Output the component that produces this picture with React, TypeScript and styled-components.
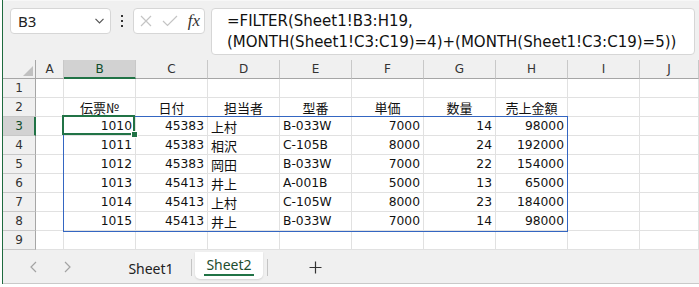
import React from "react";
import styled, { createGlobalStyle } from "styled-components";

const GlobalStyle = createGlobalStyle`
  html, body { margin: 0; padding: 0; background: #ffffff; }
  body { width: 699px; height: 287px; overflow: hidden; }
`;

const GREEN = "#217346";
const CHROME = "#f0f0f0";
const GRID = "#e1e1e1";
const HEAD_LINE = "#c8c8c8";

const Window = styled.div`
  margin-left: 2px;
  border-left: 1px solid #1f6b3f;
  width: 696px;
  display: flex;
  flex-direction: column;
  background: ${CHROME};
`;

const FormulaBar = styled.div`
  height: 60px;
  box-sizing: border-box;
  padding: 7px 4px 0 7px;
  display: flex;
  align-items: flex-start;
  background: ${CHROME};
  border-top: 1px solid #f7f7f7;
`;

const Box = styled.div`
  box-sizing: border-box;
  background: #ffffff;
  border: 1px solid #d6d6d6;
  border-radius: 4px;
  height: 26px;
  display: flex;
  align-items: center;
`;

const NameBox = styled(Box)`
  width: 101px;
  padding: 0 6px 0 7px;
  justify-content: space-between;
`;

const NameText = styled.span`
  font-family: "Noto Sans", sans-serif;
  font-size: 15px;
  color: #222;
`;

const DotsCell = styled.div`
  width: 22px;
  height: 26px;
  display: flex;
  align-items: center;
  justify-content: center;
`;

const FxBox = styled(Box)`
  width: 72px;
  padding: 0 4px 0 6px;
  justify-content: space-between;
`;

const FxLabel = styled.span`
  font-family: "Liberation Serif", "DejaVu Serif", serif;
  font-style: italic;
  font-size: 17px;
  color: #333;
  line-height: 1;
  margin-top: -2px;
`;

const FormulaBox = styled(Box)`
  margin-left: 6px;
  flex: 1;
  height: 47px;
  align-items: flex-start;
  padding: 0 0 0 15px;
`;

const FormulaText = styled.div`
  font-family: "DejaVu Sans", sans-serif;
  font-size: 15px;
  line-height: 21px;
  color: #111;
  padding-top: 2px;
  white-space: pre;
`;

const Sheet = styled.div`
  position: relative;
  display: grid;
  grid-template-columns: 33px 28px repeat(8, 72px) 1fr;
  grid-auto-rows: 19px;
  background: #ffffff;
`;

const Corner = styled.div`
  position: relative;
  box-sizing: border-box;
  background: ${CHROME};
  border-right: 1px solid #a6a6a6;
  border-bottom: 1px solid #a6a6a6;
`;

const CornerTriangle = styled.svg`
  position: absolute;
  right: 2px;
  bottom: 2px;
`;

const ColHead = styled.div<{ $sel?: boolean }>`
  box-sizing: border-box;
  background: ${(p) => (p.$sel ? "#d2d2d2" : CHROME)};
  border-right: 1px solid ${HEAD_LINE};
  border-bottom: ${(p) => (p.$sel ? `2px solid ${GREEN}` : "1px solid #a6a6a6")};
  font-family: "DejaVu Sans", sans-serif;
  font-size: 12px;
  color: ${(p) => (p.$sel ? "#0f4d2a" : "#333")};
  display: flex;
  align-items: center;
  justify-content: center;
  padding-top: ${(p) => (p.$sel ? "1px" : "0")};
`;

const RowHead = styled.div<{ $sel?: boolean }>`
  box-sizing: border-box;
  background: ${(p) => (p.$sel ? "#d2d2d2" : CHROME)};
  border-bottom: 1px solid ${HEAD_LINE};
  border-right: ${(p) => (p.$sel ? `2px solid ${GREEN}` : "1px solid #a6a6a6")};
  font-family: "DejaVu Sans", sans-serif;
  font-size: 12px;
  color: ${(p) => (p.$sel ? "#0f4d2a" : "#333")};
  display: flex;
  align-items: center;
  justify-content: center;
  padding-left: ${(p) => (p.$sel ? "1px" : "0")};
`;

const Cell = styled.div<{ $align?: "left" | "right" | "center"; $jp?: boolean }>`
  position: relative;
  box-sizing: border-box;
  border-right: 1px solid ${GRID};
  border-bottom: 1px solid ${GRID};
  padding: 0 3px;
  display: flex;
  align-items: center;
  justify-content: ${(p) =>
    p.$align === "right" ? "flex-end" : p.$align === "center" ? "center" : "flex-start"};
  font-family: ${(p) =>
    p.$jp ? `"Noto Sans CJK JP", sans-serif` : `"DejaVu Sans", "Noto Sans CJK JP", sans-serif`};
  font-size: ${(p) => (p.$jp ? "13px" : "12.3px")};
  color: #111;
  white-space: nowrap;
  overflow: visible;
`;

const Selection = styled.div`
  position: absolute;
  top: -2px;
  left: -2px;
  right: 0;
  bottom: 0;
  border: 2px solid ${GREEN};
  pointer-events: none;
  z-index: 3;
`;

const FillHandle = styled.div`
  position: absolute;
  right: -5px;
  bottom: -5px;
  width: 5px;
  height: 5px;
  background: ${GREEN};
  border: 1px solid #ffffff;
`;

const SpillBorder = styled.div`
  position: absolute;
  left: 60px;
  top: 56px;
  width: 505px;
  height: 116px;
  box-sizing: border-box;
  border: 1px solid #3466c2;
  pointer-events: none;
  z-index: 2;
`;

const TabBar = styled.div`
  height: 34px;
  box-sizing: border-box;
  border-bottom: 1px solid #c9c9c9;
  padding: 2px 0 0 13px;
  display: flex;
  align-items: flex-start;
  background: ${CHROME};
`;

const NavButton = styled.div`
  width: 34px;
  height: 30px;
  display: flex;
  align-items: center;
  justify-content: center;
`;

const Tab = styled.div<{ $active?: boolean; $w: number; $ml: number }>`
  box-sizing: border-box;
  width: ${(p) => p.$w}px;
  margin-left: ${(p) => p.$ml}px;
  height: 27px;
  display: flex;
  flex-direction: column;
  align-items: center;
  padding-top: ${(p) => (p.$active ? "3px" : "7px")};
  background: ${(p) => (p.$active ? "#ffffff" : "transparent")};
  border-radius: 0 0 5px 5px;
  box-shadow: ${(p) => (p.$active ? "0 1px 2px rgba(0,0,0,0.12)" : "none")};
`;

const TabLabel = styled.span<{ $active?: boolean }>`
  font-family: "Noto Sans", sans-serif;
  font-size: 14px;
  line-height: 19px;
  color: ${(p) => (p.$active ? "#1e4d2e" : "#222")};
  border-bottom: 2px solid ${(p) => (p.$active ? GREEN : "transparent")};
  padding: 0 2px;
`;

const TabSep = styled.div<{ $ml: number }>`
  width: 1px;
  height: 17px;
  margin-top: 7px;
  margin-left: ${(p) => p.$ml}px;
  background: #c4c4c4;
`;

const AddButton = styled.div`
  width: 24px;
  height: 30px;
  margin-left: 35px;
  display: flex;
  align-items: center;
  justify-content: center;
`;

const COLS = ["A", "B", "C", "D", "E", "F", "G", "H", "I", "J"];

type Row = [number, number, string, string, number, number, number];
const DATA: Row[] = [
  [1010, 45383, "上村", "B-033W", 7000, 14, 98000],
  [1011, 45383, "相沢", "C-105B", 8000, 24, 192000],
  [1012, 45383, "岡田", "B-033W", 7000, 22, 154000],
  [1013, 45413, "井上", "A-001B", 5000, 13, 65000],
  [1014, 45413, "上村", "C-105W", 8000, 23, 184000],
  [1015, 45413, "井上", "B-033W", 7000, 14, 98000],
];
const HEADERS = ["伝票№", "日付", "担当者", "型番", "単価", "数量", "売上金額"];

function Chevron() {
  return (
    <svg width="9" height="6" viewBox="0 0 9 6">
      <polyline points="0.5,0.8 4.5,4.8 8.5,0.8" fill="none" stroke="#555" strokeWidth="1.2" />
    </svg>
  );
}

function VDots() {
  return (
    <svg width="4" height="14" viewBox="0 0 4 14">
      <rect x="1" y="1" width="2" height="2" fill="#333" />
      <rect x="1" y="6" width="2" height="2" fill="#333" />
      <rect x="1" y="11" width="2" height="2" fill="#333" />
    </svg>
  );
}

function CrossIcon() {
  return (
    <svg width="12" height="12" viewBox="0 0 12 12">
      <path d="M1 1 L11 11 M11 1 L1 11" stroke="#c4c4c4" strokeWidth="1.2" fill="none" />
    </svg>
  );
}

function CheckIcon() {
  return (
    <svg width="16" height="12" viewBox="0 0 16 12">
      <polyline points="1,6 5.5,10.5 15,1" stroke="#c4c4c4" strokeWidth="1.2" fill="none" />
    </svg>
  );
}

function NavArrow({ dir }: { dir: "left" | "right" }) {
  const pts = dir === "left" ? "6,1 1,6 6,11" : "1,1 6,6 1,11";
  return (
    <svg width="7" height="12" viewBox="0 0 7 12">
      <polyline points={pts} fill="none" stroke="#a3a3a3" strokeWidth="1.2" />
    </svg>
  );
}

function PlusIcon() {
  return (
    <svg width="13" height="13" viewBox="0 0 13 13">
      <path d="M6.5 0.5 V12.5 M0.5 6.5 H12.5" stroke="#333" strokeWidth="1.2" fill="none" />
    </svg>
  );
}

function DataRow({ n, row }: { n: number; row?: Row }) {
  const sel = n === 3;
  return (
    <>
      <RowHead $sel={sel}>{n}</RowHead>
      <Cell />
      {row ? (
        <>
          <Cell $align="right">
            {row[0]}
            {sel && (
              <Selection>
                <FillHandle />
              </Selection>
            )}
          </Cell>
          <Cell $align="right">{row[1]}</Cell>
          <Cell $jp>{row[2]}</Cell>
          <Cell>{row[3]}</Cell>
          <Cell $align="right">{row[4]}</Cell>
          <Cell $align="right">{row[5]}</Cell>
          <Cell $align="right">{row[6]}</Cell>
        </>
      ) : (
        Array.from({ length: 7 }).map((_, i) => <Cell key={i} />)
      )}
      <Cell />
      <Cell />
    </>
  );
}

export default function App() {
  return (
    <>
      <GlobalStyle />
      <Window>
        <FormulaBar>
          <NameBox>
            <NameText>B3</NameText>
            <Chevron />
          </NameBox>
          <DotsCell>
            <VDots />
          </DotsCell>
          <FxBox>
            <CrossIcon />
            <CheckIcon />
            <FxLabel>fx</FxLabel>
          </FxBox>
          <FormulaBox>
            <FormulaText>
              {"=FILTER(Sheet1!B3:H19,\n(MONTH(Sheet1!C3:C19)=4)+(MONTH(Sheet1!C3:C19)=5))"}
            </FormulaText>
          </FormulaBox>
        </FormulaBar>

        <Sheet>
          <Corner>
            <CornerTriangle width="10" height="10" viewBox="0 0 10 10">
              <polygon points="10,0 10,10 0,10" fill="#c0c0c0" />
            </CornerTriangle>
          </Corner>
          {COLS.map((c) => (
            <ColHead key={c} $sel={c === "B"}>
              {c}
            </ColHead>
          ))}

          <DataRow n={1} />

          <RowHead>2</RowHead>
          <Cell />
          {HEADERS.map((h) => (
            <Cell key={h} $align="center" $jp>
              {h}
            </Cell>
          ))}
          <Cell />
          <Cell />

          {DATA.map((r, i) => (
            <DataRow key={i} n={i + 3} row={r} />
          ))}
          <DataRow n={9} />

          <SpillBorder />
        </Sheet>

        <TabBar>
          <NavButton>
            <NavArrow dir="left" />
          </NavButton>
          <NavButton>
            <NavArrow dir="right" />
          </NavButton>
          <Tab $w={72} $ml={31}>
            <TabLabel>Sheet1</TabLabel>
          </Tab>
          <TabSep $ml={4} />
          <Tab $w={68} $ml={3} $active>
            <TabLabel $active>Sheet2</TabLabel>
          </Tab>
          <TabSep $ml={4} />
          <AddButton>
            <PlusIcon />
          </AddButton>
        </TabBar>
      </Window>
    </>
  );
}
